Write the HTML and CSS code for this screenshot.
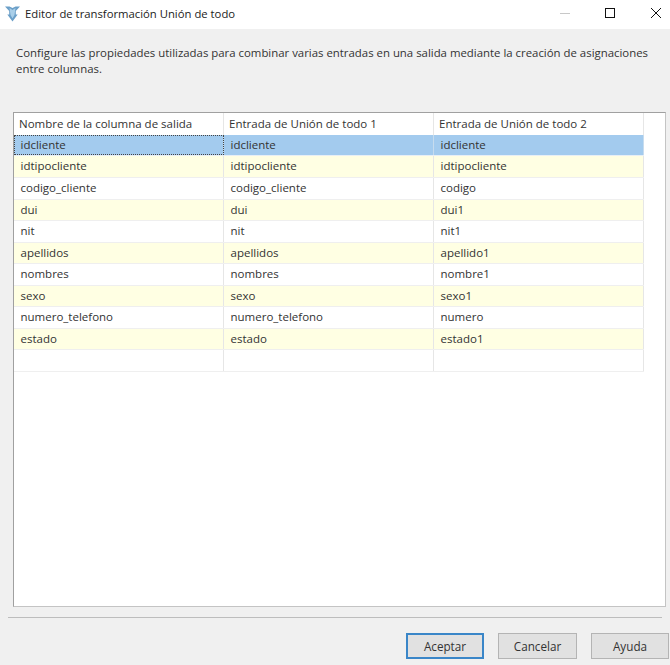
FILE: index.html
```html
<!DOCTYPE html>
<html lang="es">
<head>
    <meta charset="UTF-8">
    <meta name="viewport" content="width=device-width, initial-scale=1.0">
    <title>Editor de transformación Unión de todo</title>
    <link rel="stylesheet" href="styles.css">
</head>
<body>
    <div class="window">
        <!-- Title bar -->
        <div class="titlebar">
            <svg class="app-icon" width="20" height="20" viewBox="0 0 20 20">
                <path d="M2 1.5 L6.5 1.5 L9.5 3 L12.5 1.5 L17 1.5 L12.8 6 L12.8 9.5 L14.7 9.5 L9.5 16.5 L4.3 9.5 L6.2 9.5 L6.2 6 Z" fill="#6b9fc8"/>
                <path d="M6.5 3 L9.5 5 L12.5 3 L11.5 10 L9.5 13.5 L7.5 10 Z" fill="#a9cfe9"/>
            </svg>
            <span class="title">Editor de transformación Unión de todo</span>
            <div class="controls">
                <svg width="12" height="12" viewBox="0 0 12 12"><path d="M2 6.5 H12" stroke="#c8c8c8" fill="none"/></svg>
                <svg width="12" height="12" viewBox="0 0 12 12"><rect x="1.5" y="1.5" width="9" height="9" stroke="#111" fill="none"/></svg>
                <svg width="12" height="12" viewBox="0 0 12 12"><path d="M1 1 L11 11 M11 1 L1 11" stroke="#111" fill="none"/></svg>
            </div>
        </div>

        <div class="content">
            <p class="intro">Configure las propiedades utilizadas para combinar varias entradas en una salida mediante la creación de asignaciones entre columnas.</p>

            <!-- Mapping grid -->
            <div class="panel">
                <div class="grid">
                    <div class="row header">
                        <div class="cell">Nombre de la columna de salida</div>
                        <div class="cell">Entrada de Unión de todo 1</div>
                        <div class="cell">Entrada de Unión de todo 2</div>
                    </div>
                    <div class="row selected">
                        <div class="cell focus">idcliente</div>
                        <div class="cell">idcliente</div>
                        <div class="cell">idcliente</div>
                    </div>
                    <div class="row alt">
                        <div class="cell">idtipocliente</div>
                        <div class="cell">idtipocliente</div>
                        <div class="cell">idtipocliente</div>
                    </div>
                    <div class="row">
                        <div class="cell">codigo_cliente</div>
                        <div class="cell">codigo_cliente</div>
                        <div class="cell">codigo</div>
                    </div>
                    <div class="row alt">
                        <div class="cell">dui</div>
                        <div class="cell">dui</div>
                        <div class="cell">dui1</div>
                    </div>
                    <div class="row">
                        <div class="cell">nit</div>
                        <div class="cell">nit</div>
                        <div class="cell">nit1</div>
                    </div>
                    <div class="row alt">
                        <div class="cell">apellidos</div>
                        <div class="cell">apellidos</div>
                        <div class="cell">apellido1</div>
                    </div>
                    <div class="row">
                        <div class="cell">nombres</div>
                        <div class="cell">nombres</div>
                        <div class="cell">nombre1</div>
                    </div>
                    <div class="row alt">
                        <div class="cell">sexo</div>
                        <div class="cell">sexo</div>
                        <div class="cell">sexo1</div>
                    </div>
                    <div class="row">
                        <div class="cell">numero_telefono</div>
                        <div class="cell">numero_telefono</div>
                        <div class="cell">numero</div>
                    </div>
                    <div class="row alt">
                        <div class="cell">estado</div>
                        <div class="cell">estado</div>
                        <div class="cell">estado1</div>
                    </div>
                    <div class="row">
                        <div class="cell"></div>
                        <div class="cell"></div>
                        <div class="cell"></div>
                    </div>
                </div>
            </div>

            <div class="separator"></div>

            <div class="buttons">
                <button class="default" type="button">Aceptar</button>
                <button class="wide" type="button">Cancelar</button>
                <button type="button">Ayuda</button>
            </div>
        </div>
    </div>
</body>
</html>
```

FILE: styles.css
```css
html, body {
    margin: 0;
    padding: 0;
}

body {
    font-family: "Open Sans", "Noto Sans", sans-serif;
    font-size: 11.5px;
    color: #333;
    background-color: #f0f0f0;
}

.window {
    width: 670px;
    height: 665px;
    display: flex;
    flex-direction: column;
    overflow: hidden;
}

.titlebar {
    height: 29px;
    background-color: #fff;
    display: flex;
    align-items: center;
    padding-left: 3px;
    flex-shrink: 0;
}

.app-icon {
    margin-right: 2px;
}

.title {
    color: #222;
    font-size: 11.3px;
    margin-bottom: 2px;
}

.controls {
    margin-left: auto;
    display: flex;
    gap: 34px;
    padding-right: 8px;
    margin-bottom: 4px;
}

.content {
    flex: 1;
    display: flex;
    flex-direction: column;
    padding: 16px 0 6px 13px;
    min-height: 0;
}

.intro {
    margin: 0 0 0 3px;
    width: 645px;
    height: 67px;
    font-size: 11.4px;
    line-height: 16px;
}

.panel {
    width: 651px;
    height: 493px;
    background-color: #fff;
    border: 1px solid #a9a9a9;
    border-color: #a0a0a0 #c4c4c4 #c4c4c4 #a0a0a0;
    flex-shrink: 0;
}

.grid {
    width: 630px;
}

.row {
    display: grid;
    grid-template-columns: 210px 210px 210px;
    height: 21.55px;
    box-sizing: border-box;
    border-bottom: 1px solid #efefef;
}

.row.header {
    height: 21.95px;
    border-bottom: none;
}

.row.alt {
    background-color: #ffffe3;
}

.row.selected {
    background-color: #a3cbee;
    border-bottom-color: #e8eff5;
}

.cell {
    border-right: 1px solid #e6e6e6;
    padding-left: 6.5px;
    line-height: 20px;
    white-space: nowrap;
    overflow: hidden;
}

.header .cell {
    padding-left: 5px;
    line-height: 21px;
}

.selected .cell {
    border-right-color: #c7dcee;
}

.cell.focus {
    outline: 1px dotted #444;
    outline-offset: -1px;
}

.separator {
    height: 1px;
    width: 654px;
    margin: 10px 0 0 -5px;
    background-color: #bdbdbd;
    flex-shrink: 0;
}

.buttons {
    display: flex;
    justify-content: flex-end;
    gap: 14px;
    margin-top: 15px;
    padding-right: 1px;
}

button {
    width: 78px;
    height: 26px;
    font-family: inherit;
    font-size: 11.7px;
    color: #333;
    background-color: #e1e1e1;
    border: 1px solid #b4b4b4;
    padding: 0;
}

button.wide {
    width: 79px;
}

button.default {
    border: 2px solid #3a86c8;
}
```
